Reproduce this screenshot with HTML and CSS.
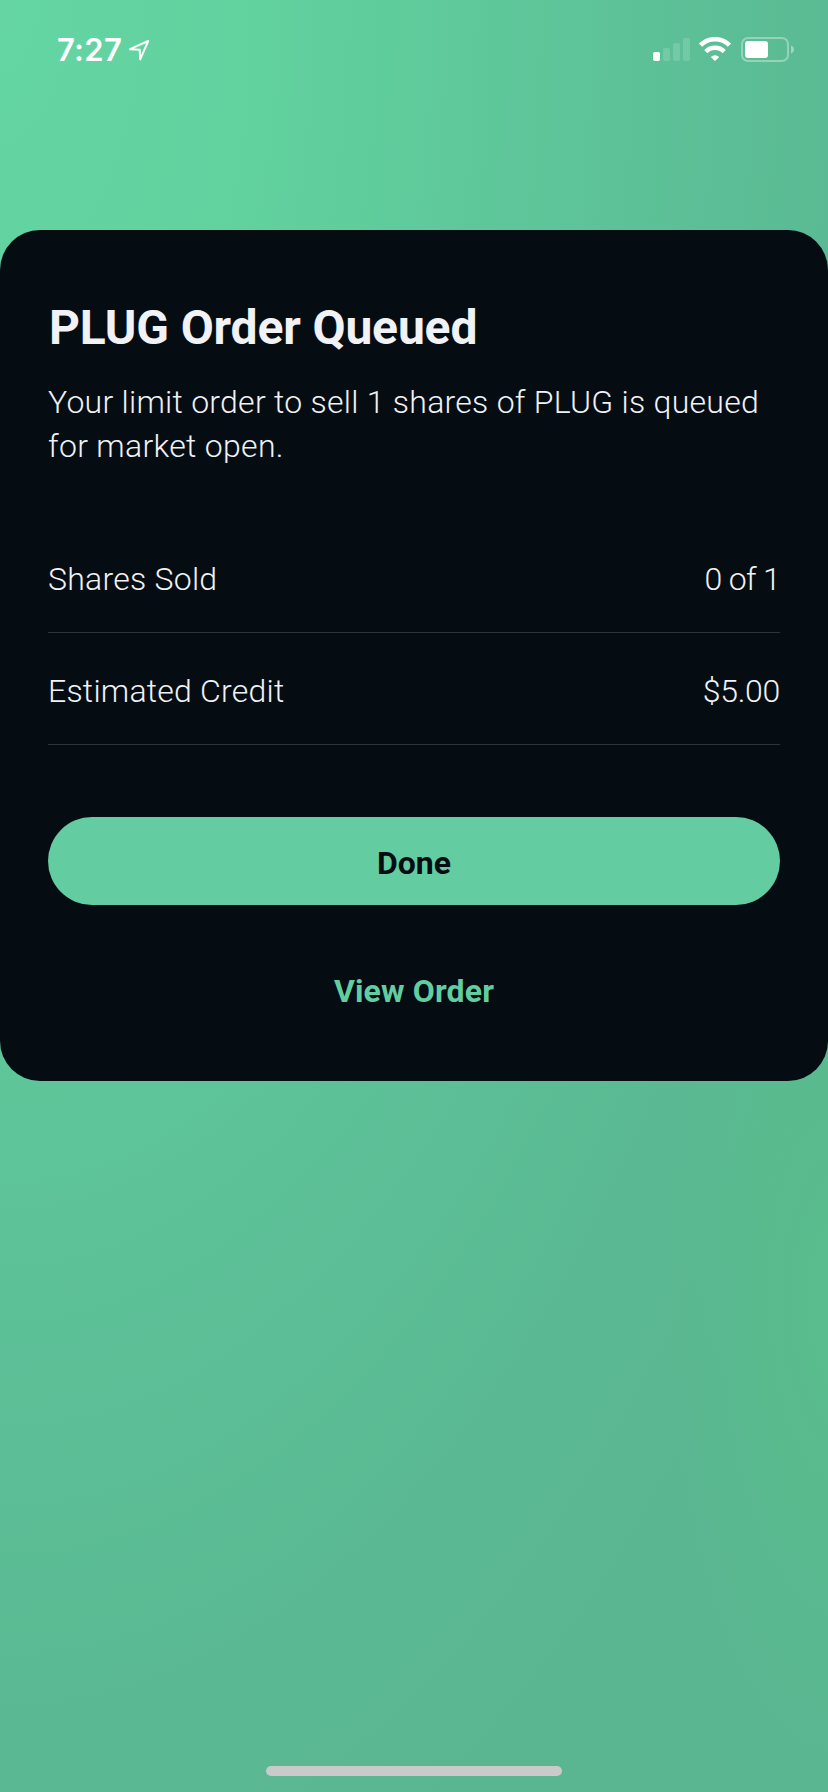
FILE: index.html
```html
<!DOCTYPE html>
<html lang="en">
<head>
<meta charset="utf-8">
<title>PLUG Order Queued</title>
<link rel="stylesheet" href="styles.css">
</head>
<body>
<div class="screen">
  <header class="status">
    <div class="status-left">
      <span class="time">7:27</span>
      <svg class="location" width="24" height="24" viewBox="0 0 24 24"><path d="M3 11.2 21.2 3 13.2 21.4 12.7 11.8Z" fill="none" stroke="#fff" stroke-width="2" stroke-linejoin="round"/></svg>
    </div>
    <div class="status-right">
      <svg width="38" height="24" viewBox="0 0 38 24" fill="#fff"><rect x="0" y="14" width="7" height="9" rx="1.8"/><g opacity=".15"><rect x="10" y="10" width="7" height="13" rx="1.8"/><rect x="20" y="5" width="7" height="18" rx="1.8"/><rect x="30" y="0" width="7" height="23" rx="1.8"/></g></svg>
      <svg class="wifi" width="32" height="24" viewBox="0 0 32 24"><g fill="none" stroke="#fff" stroke-width="4.6"><path d="M1.5 8.2A20.5 20.5 0 0 1 30.5 8.2"/><path d="M6.8 14.6A13 13 0 0 1 25.2 14.6"/></g><path d="M11.8 20Q16 16.4 20.2 20L16.6 23.4Q16 24 15.4 23.4Z" fill="#fff"/></svg>
      <svg class="battery" width="54" height="26" viewBox="0 0 54 26"><rect x="1" y="1" width="46" height="23" rx="6" fill="none" stroke="#fff" stroke-opacity=".35" stroke-width="2"/><rect x="4" y="4" width="23" height="17" rx="3" fill="#fff"/><path d="M50 8.5Q53 9.7 53 12.5T50 16.5Z" fill="#fff" fill-opacity=".4"/></svg>
    </div>
  </header>
  <main class="card">
    <h1 class="title">PLUG Order Queued</h1>
    <p class="message"><span class="line-one">Your limit order to sell 1 shares of PLUG is queued</span><br><span class="line-two">for market open.</span></p>
    <div class="row"><span class="shares">Shares Sold</span><span class="count">0 of 1</span></div>
    <div class="row"><span class="estimate">Estimated Credit</span><span class="price">$5.00</span></div>
    <button class="button done"><span>Done</span></button>
    <button class="button view"><span>View Order</span></button>
  </main>
  <footer class="home"><div class="home-bar"></div></footer>
</div>
</body>
</html>
```
FILE: styles.css
```css
* { box-sizing: border-box; }
body { margin: 0; }
.screen {
  width: 828px;
  height: 1792px;
  display: flex;
  flex-direction: column;
  overflow: hidden;
  font-family: Roboto, sans-serif;
  background:
    radial-gradient(ellipse 170px 460px at 838px 1300px, rgba(89, 193, 138, .7), rgba(89, 193, 140, 0)),
    radial-gradient(ellipse 1000px 2000px at 0 0, #64d6a3 0%, #61d19e 27%, #5fc99b 46%, #5dc198 64%, #5aba93 84%, #5ab691 100%);
}
.status {
  height: 230px;
  display: flex;
  justify-content: space-between;
  align-items: flex-start;
  padding: 37px 33px 0 57px;
}
.status-left, .status-right { display: flex; align-items: flex-start; }
.time {
  font: 600 31px/25px Inter, sans-serif;
  color: #fff;
  letter-spacing: .3px;
}
.location { margin: 1px 0 0 5px; }
.status-right svg:first-child { margin-top: 1px; }
.wifi { margin-left: 8px; }
.battery { margin-left: 10px; }
.card {
  height: 851px;
  padding: 70px 48px 0;
  border-radius: 40px;
  background: #050d13;
  color: #f0f2f6;
  display: flex;
  flex-direction: column;
}
.title { margin: 0 0 0 1px; font-size: 48px; line-height: 56px; font-weight: 700; letter-spacing: -.15px; white-space: nowrap; }
.message { margin: 24px 0 0; font-size: 32px; line-height: 44px; font-weight: 300; white-space: nowrap; }
.line-one { letter-spacing: .26px; }
.line-two { letter-spacing: .3px; }
.row {
  height: 112px;
  padding-top: 4px;
  display: flex;
  justify-content: space-between;
  align-items: center;
  border-bottom: 1px solid #303437;
  font-size: 32px;
  font-weight: 300;
}
.message + .row { margin-top: 53px; }
.shares { letter-spacing: .25px; }
.estimate { letter-spacing: .22px; }
.count { letter-spacing: -.7px; }
.price { letter-spacing: -.3px; }
.button {
  height: 88px;
  border: 0;
  padding: 4px 0 0;
  border-radius: 44px;
  font-family: Roboto, sans-serif;
  font-size: 32px;
  font-weight: 700;
}
.done { margin-top: 72px; background: #63cda1; color: #050d13; }
.view { margin-top: 40px; background: transparent; color: #63cda1; letter-spacing: .15px; }
.home { margin-top: auto; height: 26px; display: flex; justify-content: center; }
.home-bar { width: 296px; height: 10px; border-radius: 5px; background: #cacaca; }
```
